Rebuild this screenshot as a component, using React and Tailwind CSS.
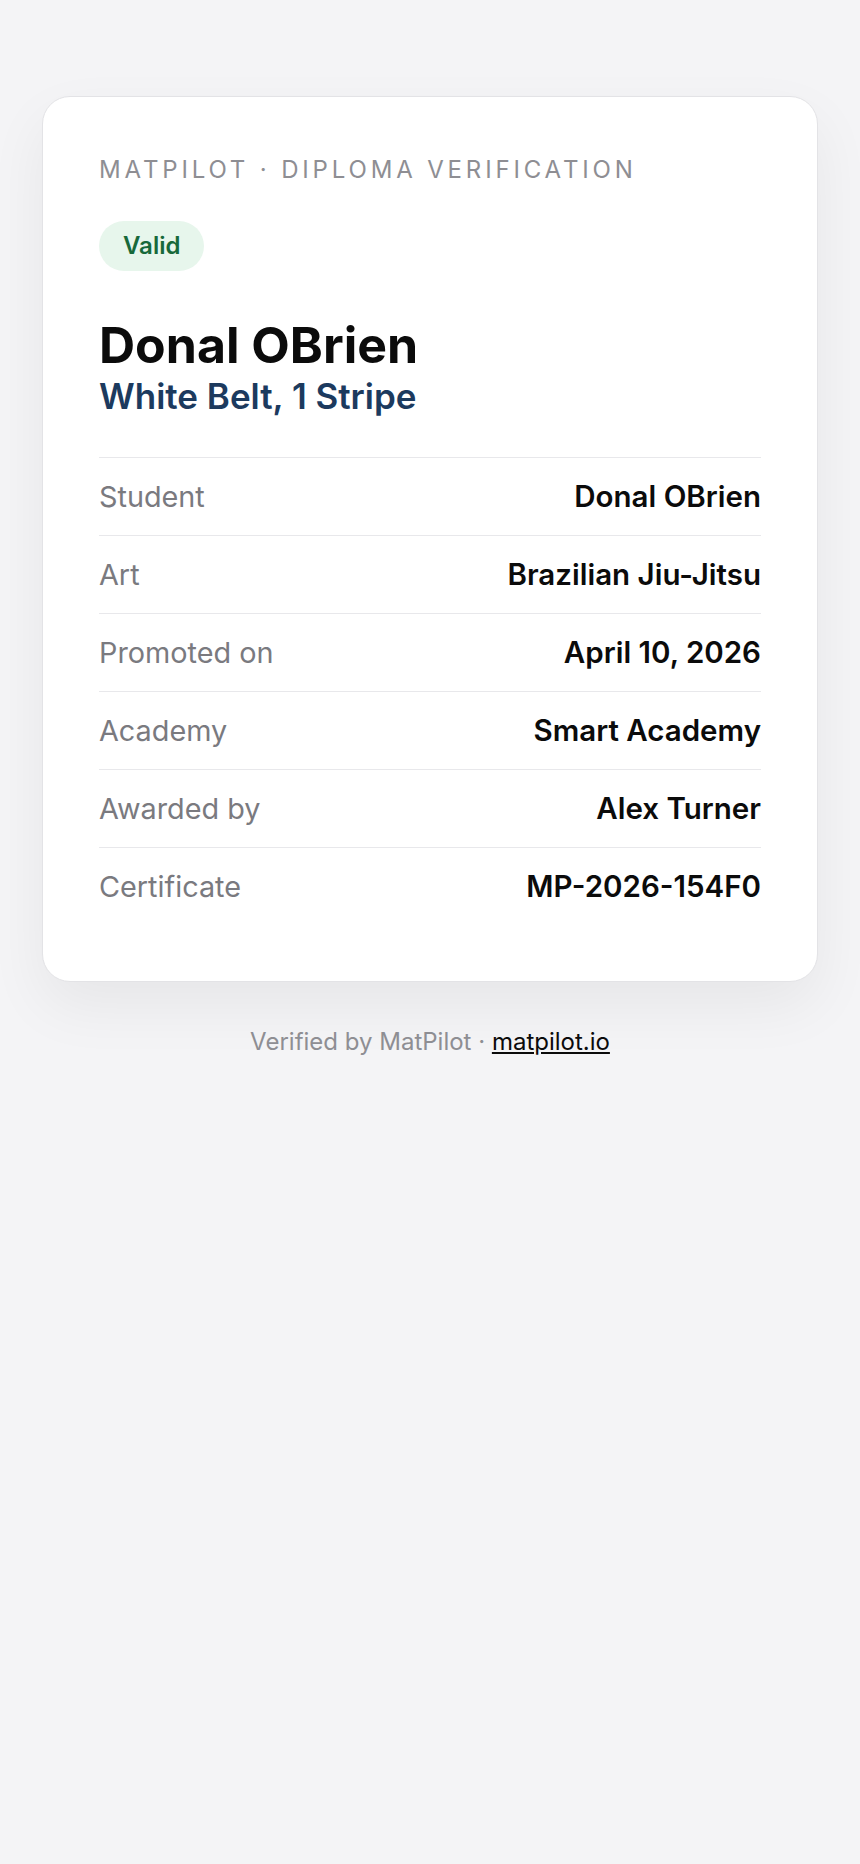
import React from "react";

const rows = [
  { label: "Student", value: "Donal OBrien" },
  { label: "Art", value: "Brazilian Jiu-Jitsu" },
  { label: "Promoted on", value: "April 10, 2026" },
  { label: "Academy", value: "Smart Academy" },
  { label: "Awarded by", value: "Alex Turner" },
  { label: "Certificate", value: "MP-2026-154F0" },
];

export default function App() {
  return (
    <div className="min-h-[1864px] bg-[#f4f4f6] px-[42px] pt-[96px] font-['Inter','Noto_Sans',sans-serif] antialiased">
      <div className="rounded-[28px] border border-[#e3e3e6] bg-white px-[56px] pt-[57px] pb-[56px] shadow-[0_24px_60px_rgba(0,0,0,0.06)]">
        <p className="text-[24px] leading-[32px] tracking-[0.16em] uppercase text-[#8e8e93]">
          MatPilot · Diploma Verification
        </p>

        <div className="mt-[35px]">
          <span className="inline-block rounded-full bg-[#e7f6ec] px-6 py-3 text-[24px] leading-[26px] font-semibold text-[#17693a]">
            Valid
          </span>
        </div>

        <h1 className="mt-[44px] text-[50px] leading-[60px] font-bold text-[#0b0b0b]">
          Donal OBrien
        </h1>
        <p className="text-[35px] leading-[42px] font-semibold text-[#1c3a5e]">
          White Belt, 1 Stripe
        </p>

        <div className="mt-[40px] border-t border-[#e8e8eb]">
          {rows.map((row, i) => (
            <div
              key={row.label}
              className={
                i === rows.length - 1
                  ? "flex items-center justify-between py-5 leading-[37px]"
                  : "flex items-center justify-between border-b border-[#e8e8eb] py-5 leading-[37px]"
              }
            >
              <span className="text-[28.8px] text-[#7a7a7f]">{row.label}</span>
              <span className="text-[29.5px] font-semibold text-[#0b0b0b]">{row.value}</span>
            </div>
          ))}
        </div>
      </div>

      <p className="mt-[44px] text-center text-[24px] leading-[32px] text-[#8e8e93]">
        Verified by MatPilot ·{" "}
        <a href="#" className="text-[#0b0b0b] underline underline-offset-2">
          matpilot.io
        </a>
      </p>
    </div>
  );
}
